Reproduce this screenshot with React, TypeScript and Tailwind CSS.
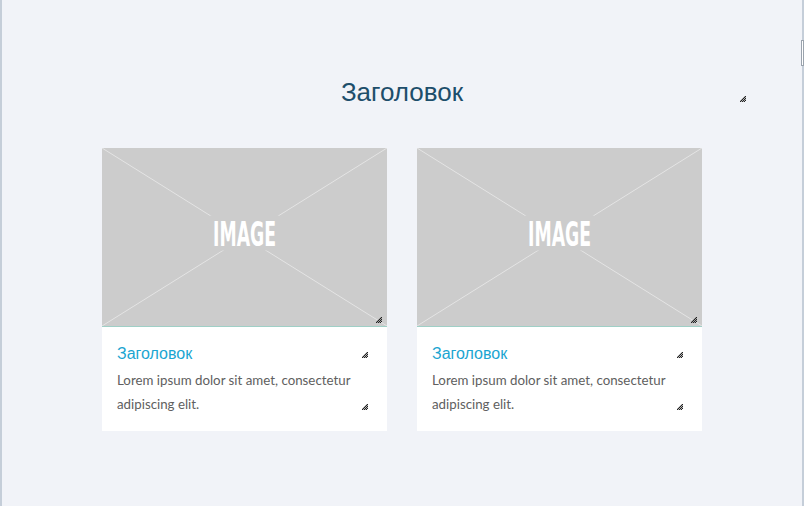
import React from 'react';

function Grip({ className = '' }: { className?: string }) {
  return (
    <svg width="8" height="8" viewBox="0 0 8 8" className={`shrink-0 ${className}`}>
      <path d="M7 1 L1 7 M7 3 L3 7 M7 5 L5 7" stroke="#222" strokeWidth="1" shapeRendering="crispEdges" />
      <path d="M6 1 L1 6 M7 2 L2 7 M7 4 L4 7" stroke="#888" strokeWidth="0.6" />
    </svg>
  );
}

function ImagePlaceholder() {
  return (
    <div className="relative h-[179px] w-full border-b border-[#9fcfc6] bg-[#cccccc]">
      <svg viewBox="0 0 285 179" preserveAspectRatio="none" className="absolute inset-0 h-full w-full">
        <line x1="0" y1="0" x2="285" y2="179" stroke="#e4e4e4" strokeWidth="1" />
        <line x1="285" y1="0" x2="0" y2="179" stroke="#e4e4e4" strokeWidth="1" />
        <rect x="108" y="68" width="69" height="35" fill="#cccccc" />
        <text
          x="142.5"
          y="98.5"
          textAnchor="middle"
          fill="#ffffff"
          fontFamily="'DejaVu Sans Condensed', 'Liberation Sans', sans-serif"
          fontWeight="600"
          fontSize="34"
          textLength="63"
          lengthAdjust="spacingAndGlyphs"
        >
          IMAGE
        </text>
      </svg>
      <Grip className="absolute bottom-[2px] right-[4px]" />
    </div>
  );
}

function Card() {
  return (
    <div className="w-[285px] bg-white">
      <ImagePlaceholder />
      <div className="flex flex-col gap-[4px] pb-[15px] pl-[15px] pr-[18px] pt-[17px]">
        <div className="flex items-center justify-between">
          <h3 className="text-[16px] leading-[20px] text-[#1ba5d1] [font-family:'Liberation_Sans',Arial,sans-serif]">
            Заголовок
          </h3>
          <Grip className="mt-[2px]" />
        </div>
        <div className="flex items-end justify-between gap-2">
          <p className="text-[13.3px] leading-[24px] text-[#606060] [font-family:Lato,'Open_Sans',sans-serif]">
            Lorem ipsum dolor sit amet, consectetur adipiscing elit.
          </p>
          <Grip className="mb-[5px]" />
        </div>
      </div>
    </div>
  );
}

export default function App() {
  return (
    <div className="h-[508px] w-full bg-white">
      <div className="relative h-[506px] border-x-2 border-[#c5ced9] bg-[#f1f3f8]">
        <div className="absolute right-[-2px] top-[40px] h-[26px] w-[3px] border border-[#9aa3ad] bg-white" />
        <div className="relative pt-[77px]">
          <h1 className="text-center text-[26px] leading-[30px] text-[#1d4e6b] [font-family:'Liberation_Sans',Arial,sans-serif]">
            Заголовок
          </h1>
          <Grip className="absolute right-[55px] top-[95px]" />
        </div>
        <div className="mt-[41px] flex justify-center gap-[30px]">
          <Card />
          <Card />
        </div>
      </div>
    </div>
  );
}
